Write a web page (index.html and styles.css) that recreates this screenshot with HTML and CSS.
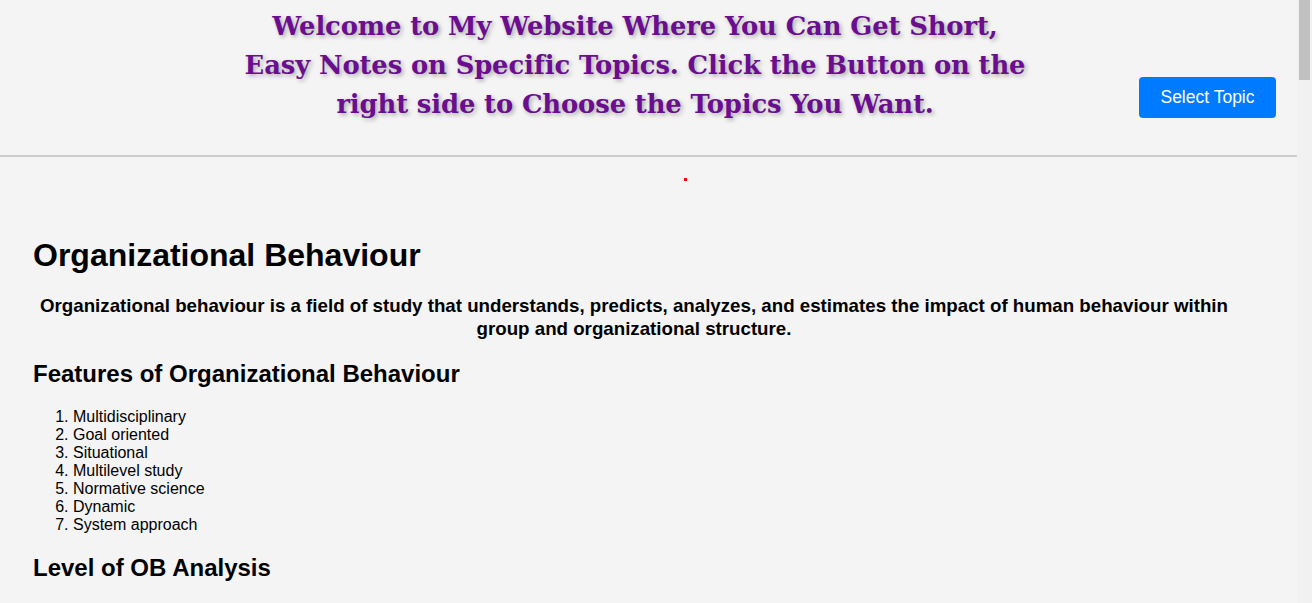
FILE: index.html
```html
<!DOCTYPE html>
<html lang="en">
<head>
<meta charset="utf-8">
<title>Short Notes</title>
<link rel="stylesheet" href="styles.css">
</head>
<body>
<div class="window">
  <div class="page">
    <header class="site-header">
      <div class="title-wrap">
        <h1 class="site-title">Welcome to My Website Where You Can Get Short,<br>Easy Notes on Specific Topics. Click the Button on the<br>right side to Choose the Topics You Want.</h1>
      </div>
      <button class="topic-btn" type="button">Select Topic</button>
    </header>
    <main class="content">
      <div class="dot"></div>
      <h1 class="topic-title">Organizational Behaviour</h1>
      <h3 class="intro">Organizational behaviour is a field of study that understands, predicts, analyzes, and estimates the impact of human behaviour within group and organizational structure.</h3>
      <h2 class="section-title">Features of Organizational Behaviour</h2>
      <ol class="list">
        <li>Multidisciplinary</li>
        <li>Goal oriented</li>
        <li>Situational</li>
        <li>Multilevel study</li>
        <li>Normative science</li>
        <li>Dynamic</li>
        <li>System approach</li>
      </ol>
      <h2 class="section-title">Level of OB Analysis</h2>
    </main>
  </div>
  <div class="scrollbar" aria-hidden="true">
    <div class="scrollbar-thumb"></div>
  </div>
</div>
</body>
</html>
```

FILE: styles.css
```css
html, body {
  margin: 0;
  padding: 0;
  background: #f4f4f4;
  overflow: hidden;
}
body {
  font-family: "Liberation Sans", Arial, sans-serif;
  color: #000;
}
.window {
  display: flex;
  height: 100vh;
}
.page {
  flex: 1;
  min-width: 0;
  overflow: hidden;
}
.scrollbar {
  width: 15px;
  flex: none;
  background: #f1f1f1;
  padding: 0 2px;
  box-sizing: border-box;
}
.scrollbar-thumb {
  height: 80px;
  background: #c1c1c1;
}
.site-header {
  display: flex;
  align-items: flex-start;
  height: 148px;
  padding: 7px 21px 0 0;
  border-bottom: 2px solid #cccccc;
}
.title-wrap {
  flex: 1;
  padding-left: 131px;
}
.site-title {
  margin: 0;
  text-align: center;
  font-family: "DejaVu Serif", Georgia, serif;
  font-weight: bold;
  font-size: 25.8px;
  line-height: 39px;
  letter-spacing: -0.1px;
  color: #6a0d8f;
  text-shadow: 2px 2px 4px rgba(0, 0, 0, 0.3);
  white-space: nowrap;
}
.topic-btn {
  margin-top: 70px;
  width: 137px;
  height: 41px;
  padding: 0;
  border: none;
  border-radius: 4px;
  background: #007bff;
  color: #fff;
  font-family: "Liberation Sans", Arial, sans-serif;
  font-size: 17.5px;
  cursor: pointer;
}
.content {
  padding: 21px 62px 20px 33px;
}
.dot {
  width: 3px;
  height: 3px;
  margin-left: 651px;
  background: #ff0000;
}
.topic-title {
  margin: 56px 0 20px;
  font-size: 32px;
  line-height: 37px;
  font-weight: bold;
}
.intro {
  margin: 0;
  text-align: center;
  font-size: 18.72px;
  line-height: 23px;
  font-weight: bold;
}
.section-title {
  margin: 20px 0;
  font-size: 24px;
  line-height: 28px;
  font-weight: bold;
}
.list {
  margin: 0;
  padding-left: 40px;
  font-size: 16px;
  line-height: 18px;
}
```
